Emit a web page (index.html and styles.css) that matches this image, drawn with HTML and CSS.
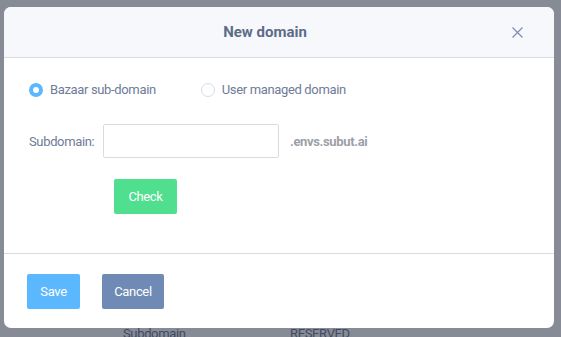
FILE: index.html
```html
<!DOCTYPE html>
<html lang="en">
<head>
    <meta charset="UTF-8">
    <meta name="viewport" content="width=device-width, initial-scale=1.0">
    <title>New domain</title>
    <link rel="stylesheet" href="styles.css">
</head>
<body>
    <!-- page behind the overlay -->
    <div class="page">
        <div class="table-head">
            <span class="col-name">Subdomain</span>
            <span class="col-status">RESERVED</span>
        </div>
    </div>

    <div class="modal">
        <div class="modal-header">
            <h2>New domain</h2>
            <button class="close" aria-label="Close">
                <svg width="11" height="11" viewBox="0 0 11 11">
                    <path d="M0.5 0.5 L10.5 10.5 M10.5 0.5 L0.5 10.5" stroke="#7c8cb2" stroke-width="1.2" fill="none"/>
                </svg>
            </button>
        </div>

        <div class="modal-body">
            <div class="radio-row">
                <label class="radio checked"><span class="dot"></span>Bazaar sub-domain</label>
                <label class="radio"><span class="dot"></span>User managed domain</label>
            </div>

            <div class="field-row">
                <label for="subdomain">Subdomain:</label>
                <input id="subdomain" type="text">
                <span class="suffix">.envs.subut.ai</span>
            </div>

            <div class="check-row">
                <button class="btn btn-check">Check</button>
            </div>
        </div>

        <div class="modal-footer">
            <button class="btn btn-save">Save</button>
            <button class="btn btn-cancel">Cancel</button>
        </div>
    </div>
</body>
</html>
```

FILE: styles.css
```css
:root {
    --backdrop: #878b95;
    --header-bg: #f7f8fc;
    --border-color: #d9dae2;
    --title-color: #5e6c88;
    --text-color: #6f7b99;
    --suffix-color: #9b9fa8;
    --accent-blue: #5bb8fe;
    --accent-green: #50de8f;
    --accent-slate: #708ab6;
}

body {
    margin: 0;
    height: 337px;
    overflow: hidden;
    font-family: Roboto, "Noto Sans", sans-serif;
    font-size: 13px;
    letter-spacing: -0.35px;
    background-color: var(--backdrop);
    position: relative;
}

.page {
    padding-top: 326px;
}

.table-head {
    display: flex;
    font-size: 13px;
    color: #3f4a63;
}

.col-name {
    margin-left: 123px;
    width: 167px;
}

.modal {
    position: absolute;
    left: 4px;
    top: 7px;
    width: 550px;
    height: 321px;
    background-color: #ffffff;
    border-radius: 7px;
    overflow: hidden;
    display: flex;
    flex-direction: column;
}

.modal-header {
    height: 50px;
    padding-right: 28px;
    background-color: var(--header-bg);
    border-bottom: 1px solid var(--border-color);
    display: flex;
    align-items: center;
    justify-content: center;
    position: relative;
}

.modal-header h2 {
    margin: 0;
    font-size: 15px;
    font-weight: 700;
    letter-spacing: 0;
    color: var(--title-color);
}

.close {
    position: absolute;
    right: 31px;
    top: 20px;
    background: none;
    border: none;
    padding: 0;
    width: 11px;
    height: 11px;
    cursor: pointer;
}

.close svg {
    display: block;
}

.modal-body {
    flex-grow: 1;
    padding: 24px 25px 0;
    border-bottom: 1px solid var(--border-color);
}

.radio-row {
    display: flex;
    gap: 45px;
    color: var(--text-color);
}

.radio {
    display: flex;
    align-items: center;
    gap: 7px;
    cursor: pointer;
}

.dot {
    width: 14px;
    height: 14px;
    border-radius: 50%;
    border: 1px solid #d7dbe6;
    background-color: #ffffff;
    box-sizing: border-box;
}

.radio.checked .dot {
    border: 4px solid var(--accent-blue);
}

.field-row {
    display: flex;
    align-items: center;
    margin-top: 27px;
    color: var(--text-color);
}

.field-row label {
    width: 74px;
}

.field-row input {
    width: 176px;
    height: 34px;
    box-sizing: border-box;
    border: 1px solid #d9dae2;
    border-radius: 2px;
    padding: 0 8px;
    font-family: inherit;
}

.suffix {
    margin-left: 11px;
    font-weight: 700;
    color: var(--suffix-color);
}

.check-row {
    padding-left: 85px;
    margin-top: 21px;
}

.btn {
    height: 35px;
    border: none;
    border-radius: 2px;
    color: #ffffff;
    font-family: inherit;
    font-size: 13px;
    letter-spacing: -0.35px;
    cursor: pointer;
}

.btn-check {
    width: 63px;
    background-color: var(--accent-green);
}

.modal-footer {
    height: 74px;
    box-sizing: border-box;
    padding: 20px 23px;
    display: flex;
    gap: 22px;
}

.btn-save {
    width: 53px;
    background-color: var(--accent-blue);
}

.btn-cancel {
    width: 62px;
    background-color: var(--accent-slate);
}
```
